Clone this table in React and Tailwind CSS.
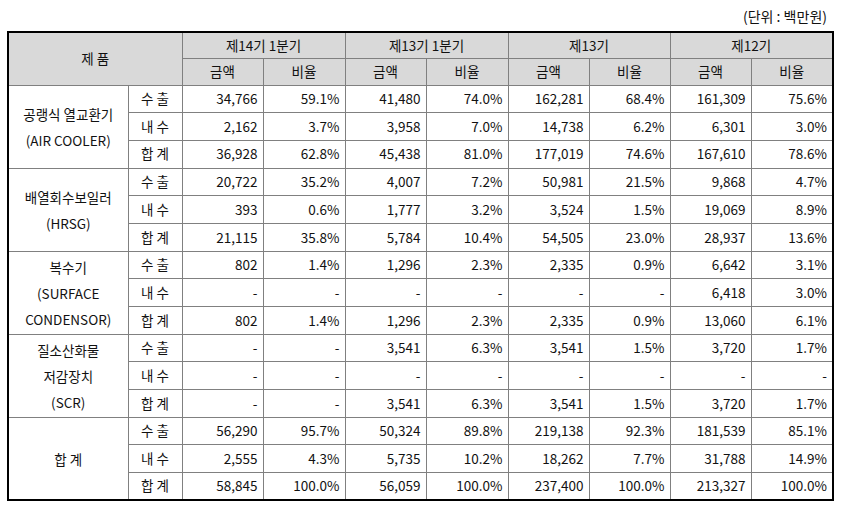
const periods = ["제14기 1분기", "제13기 1분기", "제13기", "제12기"];

const groups = [
  {
    name: ["공랭식 열교환기", "(AIR COOLER)"],
    rows: [
      ["수 출", "34,766", "59.1%", "41,480", "74.0%", "162,281", "68.4%", "161,309", "75.6%"],
      ["내 수", "2,162", "3.7%", "3,958", "7.0%", "14,738", "6.2%", "6,301", "3.0%"],
      ["합 계", "36,928", "62.8%", "45,438", "81.0%", "177,019", "74.6%", "167,610", "78.6%"],
    ],
  },
  {
    name: ["배열회수보일러", "(HRSG)"],
    rows: [
      ["수 출", "20,722", "35.2%", "4,007", "7.2%", "50,981", "21.5%", "9,868", "4.7%"],
      ["내 수", "393", "0.6%", "1,777", "3.2%", "3,524", "1.5%", "19,069", "8.9%"],
      ["합 계", "21,115", "35.8%", "5,784", "10.4%", "54,505", "23.0%", "28,937", "13.6%"],
    ],
  },
  {
    name: ["복수기", "(SURFACE", "CONDENSOR)"],
    rows: [
      ["수 출", "802", "1.4%", "1,296", "2.3%", "2,335", "0.9%", "6,642", "3.1%"],
      ["내 수", "-", "-", "-", "-", "-", "-", "6,418", "3.0%"],
      ["합 계", "802", "1.4%", "1,296", "2.3%", "2,335", "0.9%", "13,060", "6.1%"],
    ],
  },
  {
    name: ["질소산화물", "저감장치", "(SCR)"],
    rows: [
      ["수 출", "-", "-", "3,541", "6.3%", "3,541", "1.5%", "3,720", "1.7%"],
      ["내 수", "-", "-", "-", "-", "-", "-", "-", "-"],
      ["합 계", "-", "-", "3,541", "6.3%", "3,541", "1.5%", "3,720", "1.7%"],
    ],
  },
  {
    name: ["합 계"],
    rows: [
      ["수 출", "56,290", "95.7%", "50,324", "89.8%", "219,138", "92.3%", "181,539", "85.1%"],
      ["내 수", "2,555", "4.3%", "5,735", "10.2%", "18,262", "7.7%", "31,788", "14.9%"],
      ["합 계", "58,845", "100.0%", "56,059", "100.0%", "237,400", "100.0%", "213,327", "100.0%"],
    ],
  },
];

const cell = "border border-[#808080] h-[27.7px] p-0";

const App = () => {
  return (
    <div
      className="w-[841px] h-[517px] bg-white text-[13.5px] text-[#111] leading-none"
      style={{ fontFamily: '"Noto Sans CJK KR", "Noto Sans", sans-serif' }}
    >
      <div className="h-[31px] w-[832px] flex items-center justify-end pr-[5px] pt-[1px] text-[14px]">
        (단위 : 백만원)
      </div>

      <table className="ml-[7px] w-[825px] border-collapse border-2 border-black table-fixed">
        <colgroup>
          <col className="w-[120px]" />
          <col className="w-[54px]" />
          <col className="w-[81px]" />
          <col className="w-[82px]" />
          <col className="w-[81px]" />
          <col className="w-[82px]" />
          <col className="w-[81px]" />
          <col className="w-[81px]" />
          <col className="w-[81px]" />
          <col className="w-[82px]" />
        </colgroup>
        <thead className="bg-[#d9d9d9]">
          <tr>
            <th colSpan={2} rowSpan={2} className="border border-[#808080] font-normal text-center">
              제 품
            </th>
            {periods.map((p) => (
              <th key={p} colSpan={2} className="border border-[#808080] h-[26.5px] font-normal text-center">
                {p}
              </th>
            ))}
          </tr>
          <tr>
            {periods.map((p) => [
              <th key={p + "a"} className="border border-[#808080] h-[26.5px] font-normal text-center">금액</th>,
              <th key={p + "b"} className="border border-[#808080] h-[26.5px] font-normal text-center">비율</th>,
            ])}
          </tr>
        </thead>
        <tbody>
          {groups.map((g) =>
            g.rows.map((r, i) => (
              <tr key={g.name[0] + i}>
                {i === 0 && (
                  <td rowSpan={3} className="border border-[#808080] p-0 text-center leading-[26px]">
                    {g.name.map((n) => (
                      <div key={n}>{n}</div>
                    ))}
                  </td>
                )}
                <td className={cell + " text-center"}>{r[0]}</td>
                {r.slice(1).map((v, j) => (
                  <td key={j} className={cell + " text-right pr-[5px]"}>
                    {v}
                  </td>
                ))}
              </tr>
            ))
          )}
        </tbody>
      </table>
    </div>
  );
};

export default App;
